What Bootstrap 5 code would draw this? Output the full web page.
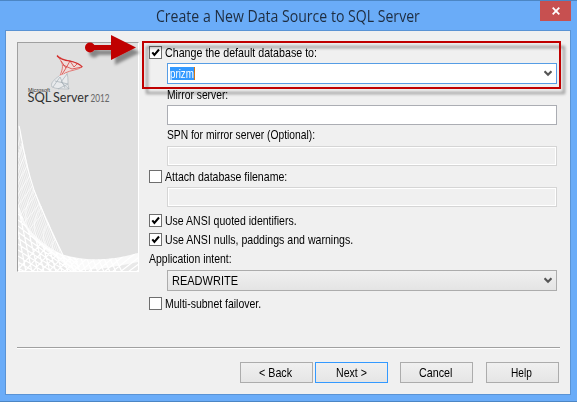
<!DOCTYPE html>
<html lang="en">
<head>
<meta charset="utf-8">
<title>Create a New Data Source to SQL Server</title>
<link href="https://cdn.jsdelivr.net/npm/bootstrap@5.3.0/dist/css/bootstrap.min.css" rel="stylesheet">
<style>
body{width:577px;height:402px;overflow:hidden;background:#6aacf8;font:13px/14px "Liberation Sans",Arial,sans-serif;color:#000}
.win{width:577px;height:402px;border-top:1px solid #4c86c4;border-bottom:1px solid #4c86c4;background:#6aacf8;padding:0 6px 6px 5px}
.titlebar{height:29px}
.title-text{font:16px/22px "Open Sans","Noto Sans",sans-serif;color:#1e2c3f;margin:4px 0 0 151px}
.close-btn{width:31px;height:20px;background:#c75050;right:6px;top:0}
.client{height:365px;border:1px solid #5a93d4;background:#f0f0f0;padding:11px 10px 0 11px}
.body-row{height:305px}
.side-art{width:122px;height:230px;background:#e0e0e0;border:1px solid #a0a0a0;border-right-color:#fff;border-bottom-color:#fff;margin-right:10px}
.fields{width:408px;padding-top:4px}
.fit{display:inline-block;white-space:nowrap;transform-origin:0 50%}
.check-line{height:13px}
.tick{width:13px;height:13px;border:1px solid #6e6e6e;background:#fff;margin-right:3px}
.tick svg{display:block}
.box{margin-left:18px;width:390px;height:20px;border:1px solid #abadb3;background:#fff}
.box.off{border-color:#d5d5d5;background:#f0f0f0;box-shadow:inset 0 0 0 1px #fff}
.combo{height:21px;padding:0 4px 0 4px}
.combo.active{border-color:#569de5;padding-left:2px;margin-top:4px}
.combo.flat{border-color:#acacac;background:linear-gradient(#f0f0f0,#e4e4e4)}
.picked{background:#3399ff;color:#fff;height:13px;width:25px;border-right:1px solid #d47414}
.lab{height:14px;padding-left:18px}
.gap-s{margin-top:3px}
.gap-m{margin-top:6px}
.gap-l{margin-top:7px}
.rule{height:2px;border-top:1px solid #a0a0a0;background:#fff;width:543px}
.foot{margin-top:13px;padding-right:1px}
.dlg-btn{width:73px;height:21px;border:1px solid #acacac;background:linear-gradient(#f0f0f0,#e5e5e5)}
.dlg-btn.go{border-color:#3399ff}
.dlg-btn:nth-child(1){margin-right:2px;padding-left:18px}
.dlg-btn:nth-child(2){margin-right:12px;padding-left:20px}
.dlg-btn:nth-child(3){margin-right:13px;padding-left:18px}
.dlg-btn:nth-child(4){padding-left:24px}
.callout{left:0;top:-1px;pointer-events:none}
</style>
</head>
<body>
<main class="win position-relative">
  <header class="titlebar d-flex">
    <div class="title-text"><span class="fit" data-w="264">Create a New Data Source to SQL Server</span></div>
    <div class="close-btn position-absolute d-flex align-items-center justify-content-center">
      <svg width="8" height="8" viewBox="0 0 8 8"><path d="M.7.7l6.600 6.600M7.300.7L.7 7.300" stroke="#fff" stroke-width="1.800"/></svg>
    </div>
  </header>
  <section class="client">
    <div class="body-row d-flex align-items-start">
      <div class="side-art">
        <svg class="d-block" width="120" height="228" viewBox="18 43 120 228">
          <defs>
            <clipPath id="upper"><path d="M18 122L20 130L32 185L63 255Q40 246 28 230L18 208Z"/></clipPath>
            <clipPath id="lower"><path d="M18 205L28 230Q40 246 63 255C85 262 112 261 138 253V271H18Z"/></clipPath>
          </defs>
          <path d="M18 122L20 130L32 185L63 255L18 225Z" fill="#fff" opacity=".15"/>
          <g clip-path="url(#upper)"><path id="fan" stroke="#fff" fill="none" stroke-width=".75" stroke-opacity=".85"/></g>
          <path d="M18 205L28 230Q40 246 63 255C85 262 112 261 138 253V271H18Z" fill="#fff" opacity=".3"/>
          <g clip-path="url(#lower)"><path id="net" stroke="#fff" fill="none" stroke-width="1.200"/></g>
          <path d="M18 203Q22 226 40 240Q50 249 63 254.500C85 261.500 112 260.500 138 253V262C112 268 90 270 72 271Q62 262 48 252Q28 238 18 212Z" fill="#fff" opacity=".75"/>
          <path d="M19 126L20 130Q26 166 34 190Q46 221 63 255" stroke="#fff" stroke-width="1.100" fill="none"/>
          <g fill="none" stroke-linejoin="round">
            <path d="M57 55C60 58 64 60 70 61C75 62 80 65 82 67C78 70 71 70 65 73L59 78C62 71 64 66 61 61Z" fill="#efdbd9" stroke="#e0605a" stroke-width=".8"/>
            <path d="M61 61L66 68L70 61L74 67L77 64M66 68L61 76M63 65L72 69L82 67" stroke="#d6403d" stroke-width=".8"/>
            <path d="M57 56Q61 60 70 61Q79 63 82.500 67" stroke="#d02a2a" stroke-width="1.100"/>
            <path d="M59 76C54 80 50 83 52 87C56 89 62 89 69 89C67 84 69 80 67 73" fill="#e8eaec" stroke="#b2babf" stroke-width=".8"/>
            <path d="M53 87L60 77L65 88M55 81L68 84L58 89M67 74L61 82L69 89" stroke="#a5afb6" stroke-width=".7"/>
          </g>
          <g fill="#333">
            <text x="28" y="91.500" font-family="Liberation Sans" font-size="5" textLength="22" lengthAdjust="spacingAndGlyphs">Microsoft</text>
            <g font-family="Lato,sans-serif" font-size="13"><text x="27.500" y="102" textLength="24" lengthAdjust="spacingAndGlyphs">SQL</text><text x="53" y="102" textLength="35.500" lengthAdjust="spacingAndGlyphs">Server</text></g>
            <text x="90.500" y="102" font-family="Lato,sans-serif" font-size="11" fill="#666" textLength="19" lengthAdjust="spacingAndGlyphs">2012</text>
          </g>
        </svg>
      </div>
      <div class="fields d-flex flex-column">
        <div class="check-line d-flex align-items-center"><span class="tick on"></span><span class="fit" data-w="152">Change the default database to:</span></div>
        <div class="box combo active d-flex align-items-center justify-content-between"><span class="picked d-flex align-items-center"><span class="fit" data-w="24">prizm</span></span><span class="chev"></span></div>
        <div class="lab mt-1"><span class="fit" data-w="61">Mirror server:</span></div>
        <div class="box gap-s"></div>
        <div class="lab gap-s"><span class="fit" data-w="148">SPN for mirror server (Optional):</span></div>
        <div class="box off mt-1 mb-1"></div>
        <div class="check-line d-flex align-items-center"><span class="tick"></span><span class="fit" data-w="122">Attach database filename:</span></div>
        <div class="box off mt-1"></div>
        <div class="check-line d-flex align-items-center gap-l"><span class="tick on"></span><span class="fit" data-w="132">Use ANSI quoted identifiers.</span></div>
        <div class="check-line d-flex align-items-center gap-m"><span class="tick on"></span><span class="fit" data-w="188">Use ANSI nulls, paddings and warnings.</span></div>
        <div class="lab ps-0 gap-m"><span class="fit" data-w="83">Application intent:</span></div>
        <div class="box combo flat d-flex align-items-center justify-content-between mt-1"><span class="fit" data-w="66">READWRITE</span><span class="chev"></span></div>
        <div class="check-line d-flex align-items-center gap-m"><span class="tick"></span><span class="fit" data-w="96">Multi-subnet failover.</span></div>
      </div>
    </div>
    <div class="rule"></div>
    <footer class="d-flex justify-content-end foot">
      <div class="dlg-btn d-flex align-items-center"><span class="fit" data-w="33">&lt; Back</span></div>
      <div class="dlg-btn go d-flex align-items-center"><span class="fit" data-w="31">Next &gt;</span></div>
      <div class="dlg-btn d-flex align-items-center"><span class="fit" data-w="33">Cancel</span></div>
      <div class="dlg-btn d-flex align-items-center"><span class="fit" data-w="21">Help</span></div>
    </footer>
  </section>
  <svg class="callout position-absolute" width="577" height="120" viewBox="0 0 577 120">
    <defs><filter id="soft" x="-10%" y="-30%" width="120%" height="160%"><feDropShadow dx="4" dy="5" stdDeviation="1.800" flood-color="#000" flood-opacity=".4"/></filter></defs>
    <rect x="143" y="42" width="417" height="46" fill="none" stroke="#c00000" stroke-width="2" filter="url(#soft)"/>
    <g fill="#c00000" filter="url(#soft)"><circle cx="90" cy="47.500" r="5"/><path d="M90 45H111V35L136 47.500L111 60V50H90Z"/></g>
  </svg>
</main>
<script>
// Check marks and drop-down arrows
document.querySelectorAll('.tick.on').forEach(e=>e.innerHTML='<svg width="11" height="11" viewBox="0 0 11 11"><path d="M2.300 5.300L4.400 7.900L9 2.500" fill="none" stroke="#000" stroke-width="2"/></svg>');
document.querySelectorAll('.chev').forEach(e=>e.innerHTML='<svg class="d-block" width="8" height="7" viewBox="0 0 8 7"><path d="M.5 1.200L4 4.700L7.500 1.200" fill="none" stroke="#555" stroke-width="2.200"/></svg>');
// Condense each label to its dialog width
document.querySelectorAll('.fit').forEach(e=>{const n=e.offsetWidth,w=+e.dataset.w;e.style.transform='scaleX('+w/n+')';e.style.marginRight=(w-n)+'px';});
// Woven lines in the banner
let fan='',net='';
for(let i=0;i<19;i++){
  fan+=`M${24-i} ${134+i*3}L${63-i*2.1} ${256-i*.9}`;
  if(i%2)fan+=`M18 ${140+i*6}L${20+i*1.3} ${126+i*5.2}`;
}
for(let i=0;i<4;i++)fan+=`M${34+i*8} ${190+i*16}Q${20+i*9} ${210+i*11} ${29+i*9} ${236+i*6}`;
for(let i=0;i<18;i++){
  net+=`M18 ${208+i*6}L${78+i*2} ${262+i*5}`;
  net+=`M${16+i*8} 272L${44+i*9} 240`;
  net+=`M${10+i*5} 215L${20+i*6} 272`;
}
document.getElementById('fan').setAttribute('d',fan);
document.getElementById('net').setAttribute('d',net);
</script>
<script src="https://cdn.jsdelivr.net/npm/bootstrap@5.3.0/dist/js/bootstrap.bundle.min.js"></script>
</body>
</html>
